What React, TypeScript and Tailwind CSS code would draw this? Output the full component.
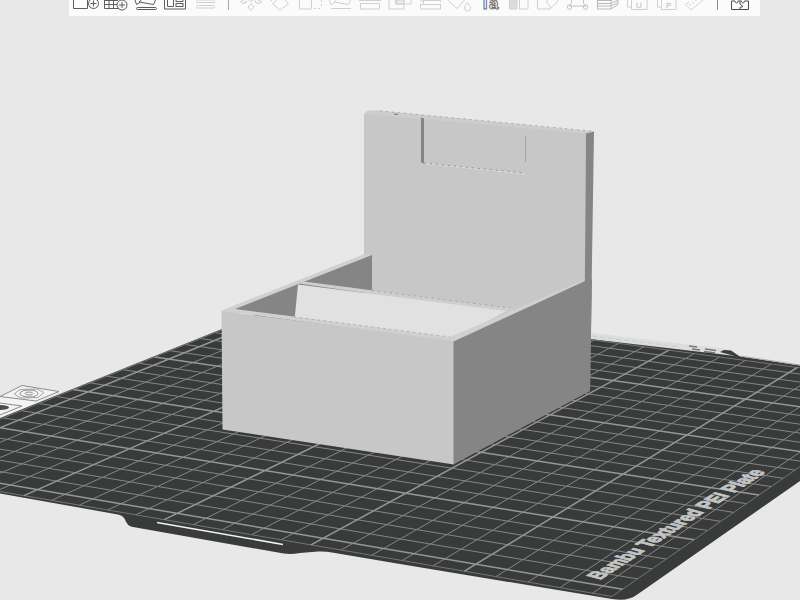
import type { ReactNode } from "react";

type Tool = { label: string; width: string; tone: string; icon: ReactNode };

const DARK = "text-[#5c5c5c]";
const LIGHT = "text-[#d0d0d0]";
const W30 = "w-[30px]";
const W29 = "w-[29px]";

const fileTools: Tool[] = [
  {
    label: "Add object",
    width: W30,
    tone: DARK,
    icon: (
      <>
        <path d="M2.5 0V8.5H16.5V0" />
        <circle cx="22.5" cy="3.5" r="5" />
        <path d="M19.5 3.5h6M22.5 .5v6" />
      </>
    ),
  },
  {
    label: "Add plate",
    width: W30,
    tone: DARK,
    icon: (
      <>
        <path d="M3.5 0V8.5H18M3.5 4.5H16M3.5 .5H17M8 0V8.5M12.5 0V8.5" />
        <circle cx="21" cy="5" r="5" />
        <path d="M18 5h6M21 2v6" />
      </>
    ),
  },
  {
    label: "Auto orient",
    width: W30,
    tone: DARK,
    icon: (
      <>
        <rect x="5.5" y="7.5" width="20" height="2" rx="1" />
        <path d="M4 0L5.500 4.500L9 2.500M10.500 0L8 2L22.500 4.500L24.500 0" />
      </>
    ),
  },
  {
    label: "Arrange",
    width: W30,
    tone: DARK,
    icon: (
      <>
        <path d="M3.500 0V9H24.500V0" />
        <path d="M6.500 0V6.500H12.500V0M15 0V1.500H22V0" />
        <rect x="15" y="3.500" width="7" height="3" />
      </>
    ),
  },
  {
    label: "Variable layer height",
    width: W30,
    tone: LIGHT,
    icon: (
      <>
        <path d="M5 0H24M5 2.500H24" />
        <rect x="5.500" y="5.500" width="18" height="2.500" rx="1" />
      </>
    ),
  },
];

const editTools: Tool[] = [
  {
    label: "Move",
    width: W30,
    tone: LIGHT,
    icon: (
      <>
        <path d="M8 0l-3.500 1.500L8 4V2.500h2.500V.5M22 0l4 1.500L22 4V2.500h-2.500V.5" />
        <path d="M15 3.500l3 3.500-3 3.500L12 7zM12.500 0l2.500 1.500L17.500 0" />
      </>
    ),
  },
  {
    label: "Rotate",
    width: W30,
    tone: LIGHT,
    icon: <path d="M11 0L6.500 3.500L14 10L22.500 3.500L19 0M4.500 1l2-1" />,
  },
  {
    label: "Scale",
    width: W30,
    tone: LIGHT,
    icon: (
      <>
        <path d="M3.500 0V9H15.500V0" />
        <path d="M18 8.500H25M25.500 0V8.500" strokeDasharray="2 2" />
      </>
    ),
  },
  {
    label: "Lay on face",
    width: W30,
    tone: LIGHT,
    icon: <path d="M5 8.500H25M3.500 0L5 5L9 2.500M10.500 0L8 2L22.500 4.500L24.500 0" />,
  },
  {
    label: "Cut",
    width: W30,
    tone: LIGHT,
    icon: (
      <>
        <rect x="4.500" y="3.500" width="19" height="5.500" />
        <path d="M6.500 0V1M21.500 0V1M3 .5H25" />
      </>
    ),
  },
  {
    label: "Mesh boolean",
    width: W30,
    tone: LIGHT,
    icon: (
      <>
        <path d="M3 0V9H18V0" />
        <path d="M9.500 0V4H25V0" />
        <path d="M10 0h8v4h-8z" fill="currentColor" fillOpacity=".35" />
      </>
    ),
  },
  {
    label: "Support painting",
    width: W30,
    tone: LIGHT,
    icon: (
      <>
        <rect x="4.500" y="4.500" width="20" height="4.500" />
        <path d="M4 1.500L7 .5H24.500V2M7.500 0V4" />
      </>
    ),
  },
  {
    label: "Color painting",
    width: W30,
    tone: LIGHT,
    icon: (
      <>
        <path d="M1.500 0L11 8.500L18.500 0" />
        <path d="M21.500 2.500C20 5 18.500 6 18.500 8a3 3 0 0 0 6 0C24.500 6 23 5 21.500 2.500z" />
      </>
    ),
  },
  {
    label: "Text",
    width: W30,
    tone: DARK,
    icon: (
      <text
        x="4"
        y="9"
        fontSize="17"
        fontWeight="700"
        fontFamily="Liberation Sans, sans-serif"
        fill="none"
        strokeWidth="1"
        opacity=".9"
      >
        Ta
      </text>
    ),
  },
  {
    label: "Seam painting",
    width: W29,
    tone: LIGHT,
    icon: (
      <>
        <path d="M3.500 0H11V9H3.500z" fill="currentColor" fillOpacity=".7" />
        <path d="M13.500 0V9H22V0" />
      </>
    ),
  },
  {
    label: "Fold",
    width: W29,
    tone: LIGHT,
    icon: <path d="M2.500 0V9H15L22.500 2V0M15 9V6L12 3V0" />,
  },
  {
    label: "Assemble",
    width: W29,
    tone: "text-[#c4c4c4]",
    icon: (
      <>
        <path d="M7.500 0V3.500L5 6H22L19.500 3.500V0" />
        <circle cx="5.500" cy="7" r="2.200" />
        <circle cx="21.500" cy="7" r="2.200" />
      </>
    ),
  },
  {
    label: "Layers",
    width: W29,
    tone: "text-[#bababa]",
    icon: (
      <path d="M4 .5H18L25 -3M4 3.500H18L25 0M4 6H18L25 2.500M4 9H18L25 4.500V0M4.500 0V9M18 0V9" />
    ),
  },
  {
    label: "Unit",
    width: W29,
    tone: LIGHT,
    icon: (
      <>
        <path d="M5.500 0V7H9M9.500 0V9.500H25V0" />
        <text x="14" y="8" fontSize="8" fontFamily="Liberation Sans, sans-serif" fill="currentColor" strokeWidth=".4">
          U
        </text>
      </>
    ),
  },
  {
    label: "Part",
    width: W29,
    tone: LIGHT,
    icon: (
      <>
        <path d="M6.500 0V7H10M10.500 0V9.500H25V0" />
        <text x="15" y="8" fontSize="8" fontFamily="Liberation Sans, sans-serif" fill="currentColor" strokeWidth=".4">
          P
        </text>
      </>
    ),
  },
  {
    label: "Measure",
    width: W29,
    tone: LIGHT,
    icon: <path d="M9 1.500L5.500 4.500L11 10L23 0M9 4l2 1.500M12 2l2 1.500M15 0l1.500 1" />,
  },
];

const assemblyTool: Tool = {
  label: "Assembly view",
  width: W30,
  tone: "text-[#4c4c4c]",
  icon: (
    <path d="M5.500 1V9.500H22.500V1H18.500C18.500 3.500 15.500 3.500 15.500 1H12C12 3.500 9 3.500 9 1H5.500M14 1.500V4L17 6.500L14 7.500V9.500" />
  ),
};

function ToolButton({ tool }: { tool: Tool }) {
  return (
    <button type="button" aria-label={tool.label} className={`h-4 shrink-0 ${tool.width} ${tool.tone}`}>
      <svg width="30" height="16" viewBox="0 0 30 16" fill="none" stroke="currentColor" strokeWidth="1">
        {tool.icon}
      </svg>
    </button>
  );
}

function Toolbar() {
  return (
    <header className="pl-[69px] pr-10">
      <div className="flex h-4 overflow-hidden bg-[#fbfbfb] pl-[2px]">
        {fileTools.map((t) => (
          <ToolButton key={t.label} tool={t} />
        ))}
        <div className="flex w-[15px] shrink-0 justify-center">
          <span className="h-[10px] w-px bg-[#a8a8a8]" />
        </div>
        {editTools.map((t) => (
          <ToolButton key={t.label} tool={t} />
        ))}
        <div className="flex w-[17px] shrink-0 justify-center">
          <span className="h-[10px] w-px bg-[#8c8c8c]" />
        </div>
        <ToolButton tool={assemblyTool} />
      </div>
    </header>
  );
}

// Bed cell coordinates -> screen, one unit is a 10 mm cell
function project(u: number, v: number) {
  const s = (u + 5) / 20;
  const t = (v - 5) / 10;
  const w = 1 - 0.0803 * s + 0.0883 * t;
  const x = (508.6 * s + 183.9 * t) / w;
  const y = (427.7 + 47.8 * s - 37 * t) / w;
  return `${x.toFixed(1)} ${y.toFixed(1)}`;
}

const U_MIN = -5.6;
const U_MAX = 19.6;
const V_MIN = -0.7;
const V_MAX = 24.8;

function gridPath(major: boolean) {
  let d = "";
  for (let u = -5; u <= 19; u++) {
    if ((u % 5 === 0) === major) d += `M${project(u, V_MIN)}L${project(u, V_MAX)}`;
  }
  for (let v = 0; v <= 24; v++) {
    if ((v % 5 === 0) === major) d += `M${project(U_MIN, v)}L${project(U_MAX, v)}`;
  }
  return d;
}

const border = `M${project(U_MIN, V_MIN)}L${project(U_MAX, V_MIN)}L${project(U_MAX, V_MAX)}L${project(U_MIN, V_MAX)}Z`;

function BuildPlate() {
  return (
    <g>
      {/* calibration stickers on the left */}
      <path d="M0 396L22 385L62 391L0 420z" fill="#f3f3f3" />
      <path d="M0 396.500L22 385.500L59 391.500L36 401L0 396.500M0 403L22 406L0 415" fill="none" stroke="#8b8b8b" />
      <g fill="none" stroke="#8f8f8f">
        <path d="M14 394L20 389.500L37 389L44 392.500L38 397.500L21 398z" stroke="#a5a5a5" />
        <ellipse cx="29" cy="393.500" rx="9" ry="3.500" />
        <ellipse cx="29" cy="393.500" rx="4" ry="1.500" />
      </g>
      <ellipse cx="0" cy="407.500" rx="9" ry="2.500" fill="#4a4a4a" />

      {/* rear strip */}
      <path d="M585 332L727 349L740 357L585 340z" fill="#dcdedd" />
      <path d="M592 336L680 347" stroke="#cbcdcc" strokeDasharray="5 3" />
      <path d="M689 346l8 1M692 349l8 1M705 349l11 1.500M704 351.500l11 1.500" stroke="#777978" strokeWidth="1.500" />
      <path d="M720 352L724 350L731 350.500L742 358z" fill="#3a3c3b" />

      <path
        d="M0 493.500L118 514.500Q123 515.500 125 519.500Q127 526 133 527L278 552.500Q288 555 300 553L318 551.500Q325 551 332 552.500L400 564L612 599Q628 602 638 594L800 481V365.500L740 356.500L590 339L300 297L222 329L110 374L0 418z"
        fill="#393b3a"
      />
      <path d="M740 356L800 365" stroke="#a9abaa" />
      <path d={gridPath(false)} fill="none" stroke="#858786" />
      <path d={border} fill="none" stroke="#747675" />
      <path d={gridPath(true)} fill="none" stroke="#969897" strokeWidth="1.500" />
      <path d="M157 522.500L283 544.500" stroke="#f2f2f2" strokeWidth="1.600" />

      {/* label printed on the bed surface */}
      <text
        transform="translate(600 580) rotate(-33) skewX(42)"
        fontFamily="Liberation Sans, sans-serif"
        fontWeight="700"
        fontSize="16"
        fill="#c3c5c4"
        stroke="#c3c5c4"
        strokeWidth="1"
      >
        Bambu Textured PEI Plate
      </text>
    </g>
  );
}

function BoxModel() {
  return (
    <g>
      {/* back panel */}
      <path d="M364 115Q364 111 370 110.500L379 110.500L594 131.500L586 134z" fill="#cdcdcd" />
      <path d="M364 114L586 133.500L585 340L364 300z" fill="#c7c7c7" />
      <path d="M586 133.500L594 131.500L590 391L584 394z" fill="#858585" />
      <path d="M380 111L592 131" fill="none" stroke="#a9a9a9" strokeDasharray="2 4" />
      <path d="M394 114l4 .5" stroke="#6f6f6f" />
      <path d="M421 117.500L424 118.500V163.500L421 162.500z" fill="#858585" />
      <path d="M424 163.500L525 174" stroke="#dadada" />
      <path d="M424 163L525 173" stroke="#929292" strokeDasharray="2 4" />
      <path d="M525.500 136V162" stroke="#a5a5a5" />

      {/* left wall */}
      <path d="M221.500 310.500L364.500 254L372 255L372 262L235 315z" fill="#d0d0d0" />
      <path d="M235 309L372 255V290.500L290 325z" fill="#858585" />

      {/* divider */}
      <path d="M299 283.500L304 281.500L512 308.500L505 313z" fill="#cecece" />
      <path d="M298 284.500L506 311L450 342L294.500 320z" fill="#e1e1e1" />
      <path d="M372 290.500L510 308" stroke="#a3a3a3" strokeDasharray="2 4" />

      {/* rims and outer faces */}
      <path d="M221.500 310.500L235 309L294 316.500L450 337L584 280L585 283L454 342z" fill="#d0d0d0" />
      <path d="M294 317L450 337" stroke="#ababab" strokeDasharray="2 4" />
      <path d="M221.500 311L454 341V464.500L222.500 429.500z" fill="#c7c7c7" />
      <path d="M453.500 341.500L585 281L592 279L590 391L453.500 464.500z" fill="#858585" />
    </g>
  );
}

export default function App() {
  return (
    <div className="min-h-screen overflow-hidden bg-[#e8e8e8]">
      <Toolbar />
      <main>
        <svg viewBox="0 16 800 584" className="block w-full" role="img" aria-label="Box model on build plate">
          <BuildPlate />
          <BoxModel />
        </svg>
      </main>
    </div>
  );
}
